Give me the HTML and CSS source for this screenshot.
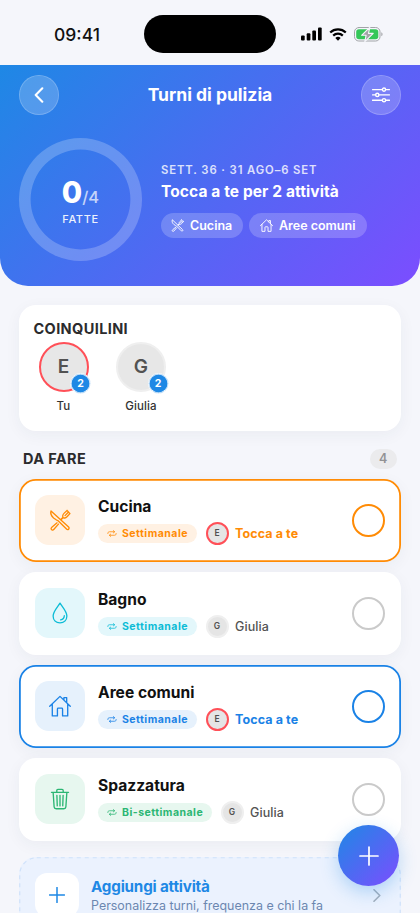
FILE: index.html
```html
<!DOCTYPE html>
<html lang="it">
<head>
<meta charset="utf-8">
<meta name="viewport" content="width=device-width, initial-scale=1">
<title>Turni di pulizia</title>
<link rel="stylesheet" href="styles.css">
</head>
<body>
<svg class="defs" aria-hidden="true">
  <symbol id="tools" viewBox="0 0 24 24">
    <path d="M2.200 2.100C1.300 5 2.700 7.700 5 9.800L8.200 12c.7.4 1.300.4 2 1l8.900 8.900c.7.7 1.700.7 2.300.1.700-.7.700-1.600 0-2.300Z"/>
    <path d="m8.800 15.100-5.700 4.700c-1.300 1.100-.9 2.500.1 3 .8.4 1.600 0 2.200-.7L10.300 16.500"/>
    <path d="m13.300 10.800 1.500-1.300c.5-.6.1-1.700.2-2.400.2-1.200.9-1.900 1.600-2.600l3.100-2.800M22.800 5l-2.900 3.100c-.8.8-1.500 1.500-2.700 1.700-.8.1-1.700-.3-2.300.2l-1.200 1.300M21.300 3.300 17.500 7.200M19.700 1.700l.8.7M22 4.100l.8.9"/>
  </symbol>
  <symbol id="house" viewBox="0 0 24 24">
    <path d="M.8 12.300 12 1.500l11.200 10.800M3.600 10v12.800h5.600v-7.500c0-.6.3-.9.900-.9h3.800c.6 0 .9.300.9.900v7.500h5.600V10M16.300 5.300V2.800h3v5.600"/>
  </symbol>
  <symbol id="drop" viewBox="0 0 24 24">
    <path d="M12 1.300c2.100 3.700 7.500 9 7.500 14.100 0 4.500-3.200 7.300-7.500 7.300s-7.500-2.800-7.500-7.300C4.500 10.300 9.900 5 12 1.300ZM16.700 15c-.1 2.600-1.500 4-4 4.500"/>
  </symbol>
  <symbol id="trash" viewBox="0 0 24 24">
    <path d="M2.700 4.700h18.600M4.500 4.700l1.100 15.900c.1 1.300.9 2 2.200 2h8.400c1.300 0 2.100-.7 2.200-2l1.100-15.900M8.500 4.700V2.800c0-.8.5-1.300 1.300-1.300h4.400c.8 0 1.300.5 1.300 1.300v1.900M8.600 8l.4 11.500M12 8v11.500M15.400 8 15 19.500"/>
  </symbol>
  <symbol id="repeat" viewBox="0 0 12 8">
    <path d="M1 4C1 2.500 1.700 1.900 3 1.900h6M7.600.500 9.200 1.900 7.600 3.300M11 4c0 1.500-.7 2.100-2 2.100H3M4.400 4.700 2.800 6.100l1.600 1.400"/>
  </symbol>
</svg>

<div class="status">
  <span class="time">09:41</span>
  <span class="island"></span>
  <span class="indicators">
    <svg class="signal" viewBox="0 0 21 14"><rect x="0" y="8.500" width="3.700" height="5" rx="1"/><rect x="5.700" y="6.300" width="3.700" height="7.200" rx="1"/><rect x="11.300" y="3.500" width="3.700" height="10" rx="1"/><rect x="17" y=".5" width="3.700" height="13" rx="1"/></svg>
    <svg class="wifi" viewBox="0 0 18 13"><path d="M1.200 4.500a11.200 11.200 0 0 1 15.600 0M4.200 7.600a6.900 6.900 0 0 1 9.600 0"/><path class="solid" d="M9 12.800 6.300 10.100a3.900 3.900 0 0 1 5.400 0Z"/></svg>
    <svg class="battery" viewBox="0 0 29 15"><rect class="shell" x=".5" y=".5" width="25.500" height="13.500" rx="4.300"/><rect class="charge" x="2.200" y="2.200" width="22.100" height="10.100" rx="2.800"/><path class="nub" d="M27.300 5.300c1.700.5 1.700 3.400 0 3.900Z"/><path class="bolt" d="M15.800.3 7.600 8.300h4.500l-1.300 6.400 8.400-8.300h-4.700Z"/></svg>
  </span>
</div>

<header class="hero">
  <nav class="bar">
    <button class="round" aria-label="Indietro"><svg class="back" viewBox="0 0 10 16"><path d="M8.300 1.300 1.700 8l6.600 6.700"/></svg></button>
    <h1>Turni di pulizia</h1>
    <button class="round" aria-label="Filtri"><svg class="sliders" viewBox="0 0 18 16"><path d="M.6 2.600h9.700M13.700 2.600h3.700M.6 7.900h3M7 7.900h10.400M.6 13.200h9.700M13.700 13.200h3.700"/><circle cx="12" cy="2.600" r="1.600"/><circle cx="5.300" cy="7.900" r="1.600"/><circle cx="12" cy="13.200" r="1.600"/></svg></button>
  </nav>
  <div class="summary">
    <div class="ring">
      <div class="score"><b>0</b><span>/4</span></div>
      <div class="done">FATTE</div>
    </div>
    <div class="week">
      <div class="dates">SETT. 36 · 31 AGO–6 SET</div>
      <div class="turn">Tocca a te per 2 attività</div>
      <div class="chips">
        <span class="chip"><svg><use href="#tools"/></svg>Cucina</span>
        <span class="chip wide"><svg><use href="#house"/></svg>Aree comuni</span>
      </div>
    </div>
  </div>
</header>

<main>
  <section class="mates">
    <h2>COINQUILINI</h2>
    <div class="people">
      <div class="person"><div class="avatar me">E<span class="badge">2</span></div><span>Tu</span></div>
      <div class="person"><div class="avatar">G<span class="badge">2</span></div><span>Giulia</span></div>
    </div>
  </section>

  <div class="heading"><h2>DA FARE</h2><span class="count">4</span></div>

  <section class="tasks">
    <article class="task orange mine">
      <div class="tile"><svg><use href="#tools"/></svg></div>
      <div class="info"><h3>Cucina</h3><div class="meta"><span class="freq"><svg><use href="#repeat"/></svg>Settimanale</span><span class="mini me">E</span><span class="who">Tocca a te</span></div></div>
      <span class="check"></span>
    </article>
    <article class="task cyan">
      <div class="tile"><svg><use href="#drop"/></svg></div>
      <div class="info"><h3>Bagno</h3><div class="meta"><span class="freq"><svg><use href="#repeat"/></svg>Settimanale</span><span class="mini">G</span><span class="who">Giulia</span></div></div>
      <span class="check"></span>
    </article>
    <article class="task blue mine">
      <div class="tile"><svg><use href="#house"/></svg></div>
      <div class="info"><h3>Aree comuni</h3><div class="meta"><span class="freq"><svg><use href="#repeat"/></svg>Settimanale</span><span class="mini me">E</span><span class="who">Tocca a te</span></div></div>
      <span class="check"></span>
    </article>
    <article class="task green">
      <div class="tile"><svg><use href="#trash"/></svg></div>
      <div class="info"><h3>Spazzatura</h3><div class="meta"><span class="freq long"><svg><use href="#repeat"/></svg>Bi-settimanale</span><span class="mini">G</span><span class="who">Giulia</span></div></div>
      <span class="check"></span>
    </article>
  </section>

  <section class="add">
    <svg class="dash"><rect x=".75" y=".75" width="380.500" height="90" rx="17"/></svg>
    <div class="plus-tile"><svg viewBox="0 0 16 16"><path d="M8 .5v15M.5 8h15"/></svg></div>
    <div class="add-text"><h3>Aggiungi attività</h3><p>Personalizza turni, frequenza e chi la fa</p></div>
    <svg class="chevron" viewBox="0 0 8 13"><path d="m1 .8 5.800 5.700L1 12.200"/></svg>
  </section>
</main>
<button class="fab" aria-label="Aggiungi"><svg viewBox="0 0 18 18"><path d="M9 0v18M0 9h18"/></svg></button>
</body>
</html>
```

FILE: styles.css
```css
* { box-sizing: border-box; }
html, body { height: 913px; overflow: hidden; }
body {
  margin: 0;
  background: #f5f6fb;
  color: #111;
  font-family: Inter, "Liberation Sans", sans-serif;
}
h1, h2, h3, p { margin: 0; }
button { padding: 0; border: 0; font: inherit; }
svg { display: block; fill: none; stroke: currentColor; stroke-linecap: round; stroke-linejoin: round; }
.defs { position: absolute; width: 0; height: 0; }

.status {
  height: 64.5px;
  padding: 14.5px 37px 0 54px;
  display: grid;
  grid-template-columns: 90px 132px 1fr;
  align-items: start;
}
.time { font-size: 17.500px; line-height: 39px; font-weight: 550; letter-spacing: 0; }
.island { height: 38.500px; border-radius: 20px; background: #000; }
.indicators { height: 39.500px; display: flex; align-items: center; justify-content: flex-end; gap: 7px; }
.signal { width: 21px; height: 14px; fill: #000; stroke: none; }
.wifi { width: 18px; height: 13px; stroke: #000; stroke-width: 2.200; stroke-linecap: butt; }
.wifi .solid { fill: #000; stroke: none; }
.battery { width: 29px; height: 15px; }
.shell { stroke: #a2a4a8; }
.charge { fill: #34c759; stroke: none; }
.nub { fill: #a2a4a8; stroke: none; }
.bolt { fill: #a2a4a8; stroke: #f5f6fb; stroke-width: 1.100; }

.hero {
  height: 221.500px;
  padding: 10.500px 19px 0;
  border-radius: 0 0 28px 28px;
  background: linear-gradient(135deg, #1e88e5, #7c4dff);
  color: #fff;
}
.bar { display: flex; align-items: center; justify-content: space-between; }
.round {
  width: 40px; height: 40px;
  display: grid; place-items: center;
  border-radius: 50%;
  border: 1px solid rgba(255,255,255,.35);
  background: rgba(255,255,255,.2);
  background-clip: padding-box;
  color: #fff;
}
.back { width: 10px; height: 16px; stroke-width: 2.100; }
.sliders { width: 18px; height: 16px; stroke-width: 1.400; }
h1 { font-size: 17.500px; line-height: 22px; font-weight: 700; }
.summary { display: flex; align-items: center; gap: 19px; margin-top: 23px; }
.ring {
  width: 123px; height: 123px;
  box-shadow: inset 0 0 0 11.600px rgba(255,255,255,.22);
  border-radius: 50%;
  display: flex; flex-direction: column; align-items: center;
  padding-top: 37px;
}
.score { display: flex; align-items: baseline; line-height: 34px; }
.score b { font-size: 29.500px; font-weight: 800; }
.score span { font-size: 16.500px; font-weight: 500; opacity: .7; }
.done { margin-top: -2px; font-size: 11px; line-height: 14px; font-weight: 550; letter-spacing: .6px; opacity: .9; }
.week { padding-top: 2px; }
.dates { font-size: 11.300px; line-height: 14px; font-weight: 600; letter-spacing: .900px; opacity: .8; white-space: nowrap; }
.turn { margin-top: 5px; font-size: 15.500px; line-height: 20px; font-weight: 700; letter-spacing: .1px; white-space: nowrap; }
.chips { display: flex; gap: 6px; margin-top: 10.500px; }
.chip {
  width: 82px; height: 25.500px; padding-left: 10px;
  display: flex; align-items: center; gap: 6px;
  border-radius: 13px;
  background: rgba(255,255,255,.2);
  font-size: 12.500px; font-weight: 600; white-space: nowrap;
}
.chip.wide { width: 117.500px; padding-left: 11px; }
.chip svg { width: 13px; height: 13px; stroke-width: 1.700; }

main { padding: 19px 19px 0; }
.mates {
  height: 126px; padding: 13.500px 14.500px;
  border-radius: 17px;
  background: #fff;
  box-shadow: 0 4px 16px rgba(40,50,80,.05);
}
h2 { font-size: 14.500px; line-height: 19px; font-weight: 650; color: #2b2b2d; letter-spacing: .38px; }
.people { display: flex; gap: 17.500px; margin-top: 4px; }
.person { width: 60px; display: flex; flex-direction: column; align-items: center; font-size: 11.500px; line-height: 15px; font-weight: 550; letter-spacing: .1px; color: #333; gap: 7px; }
.avatar {
  position: relative;
  width: 50px; height: 50px;
  display: grid; place-items: center;
  border: 2px solid #efefef; border-radius: 50%;
  background: #e7e7e7;
  font-size: 19px; font-weight: 600; color: #525252;
}
.me { border-color: #ff5058 !important; }
.badge {
  position: absolute; right: -4.500px; bottom: -4.500px;
  width: 21px; height: 21px;
  border: 1.500px solid #fff; border-radius: 50%;
  background: #1e88e5; color: #fff;
  box-shadow: inset 0 0 0 .5px #fff;
  font-size: 10.500px; line-height: 19px; font-weight: 700; text-align: center;
}
.heading { height: 20px; margin-top: 18px; padding: 0 4px; display: flex; align-items: center; justify-content: space-between; }
.heading h2 { margin-top: -1.500px; }
.count { width: 27.500px; height: 20px; border-radius: 10px; background: #ebebed; color: #929294; font-size: 12.500px; line-height: 20px; font-weight: 600; text-align: center; }

.tasks { display: grid; gap: 10.500px; margin-top: 10px; }
.task {
  height: 82.500px; padding: 0 16px;
  display: flex; align-items: center;
  border-radius: 17px;
  background: #fff;
  box-shadow: 0 4px 16px rgba(40,50,80,.05);
}
.mine { box-shadow: inset 0 0 0 1.800px var(--tone), 0 4px 16px rgba(40,50,80,.05); }
.orange { --tone: #ff8b05; --tint: #fff1e3; }
.cyan { --tone: #0dbcd6; --tint: #e3f7fb; }
.blue { --tone: #1a82e6; --tint: #e6f1fc; }
.green { --tone: #2bb673; --tint: #e7f7ef; }
.tile { width: 50px; height: 50px; display: grid; place-items: center; border-radius: 14px; background: var(--tint); color: var(--tone); }
.tile svg { width: 22px; height: 22px; stroke-width: 1.450; }
.info { flex: 1; margin-left: 13px; padding-top: 1px; }
h3 { font-size: 15.600px; line-height: 19px; font-weight: 650; white-space: nowrap; }
.meta { display: flex; align-items: center; height: 23px; margin-top: 6px; }
.freq { width: 99px; height: 18.500px; padding-left: 9px; display: flex; align-items: center; gap: 5px; border-radius: 10px; background: var(--tint); color: var(--tone); font-size: 10.500px; font-weight: 700; letter-spacing: .48px; white-space: nowrap; }
.freq.long { width: 114px; }
.freq svg { width: 10px; height: 7px; stroke-width: .95; }
.mini { width: 23px; height: 23px; margin-left: 8.500px; border: 2px solid #efefef; border-radius: 50%; background: #e5e5e5; color: #505050; font-size: 8.500px; line-height: 19px; font-weight: 600; text-align: center; }
.who { margin-left: 6.500px; font-size: 12.500px; font-weight: 500; letter-spacing: .1px; color: #535353; white-space: nowrap; }
.mine .who { color: var(--tone); font-weight: 650; }
.check { width: 33px; height: 33px; border: 2px solid #cacaca; border-radius: 50%; }
.mine .check { border-color: var(--tone); }

.add {
  position: relative;
  height: 91.500px; margin-top: 16.500px; padding: 16px 20px 0 15.500px;
  display: flex; align-items: flex-start;
  border-radius: 17px;
  background: #ebf2fe;
}
.dash { position: absolute; inset: 0; width: 100%; height: 100%; stroke: #d0e2fa; stroke-width: 1.200; stroke-dasharray: 4 4; stroke-linecap: butt; }
.plus-tile { width: 44px; height: 44px; display: grid; place-items: center; border-radius: 12px; background: #fff; color: #1e88e5; }
.plus-tile svg { width: 16px; height: 16px; stroke-width: 1.500; }
.add-text { flex: 1; margin-left: 12.500px; padding-top: 3px; }
.add-text h3 { color: #1e88e5; font-size: 15.200px; letter-spacing: -.18px; line-height: 21px; }
.add-text p { margin-top: .5px; font-size: 12.450px; line-height: 16px; color: #6b87b0; white-space: nowrap; }
.chevron { width: 8px; height: 13px; margin-top: 15.500px; stroke: #a3afbd; stroke-width: 1.600; }

.fab {
  position: fixed; left: 338px; top: 825px;
  width: 61px; height: 61px;
  display: grid; place-items: center;
  border-radius: 50%;
  background: linear-gradient(135deg, #1e88e5, #7c4dff);
  color: #fff;
  box-shadow: 0 6px 18px rgba(30,136,229,.3);
}
.fab svg { width: 18px; height: 18px; stroke-width: 1.700; overflow: visible; }
```
